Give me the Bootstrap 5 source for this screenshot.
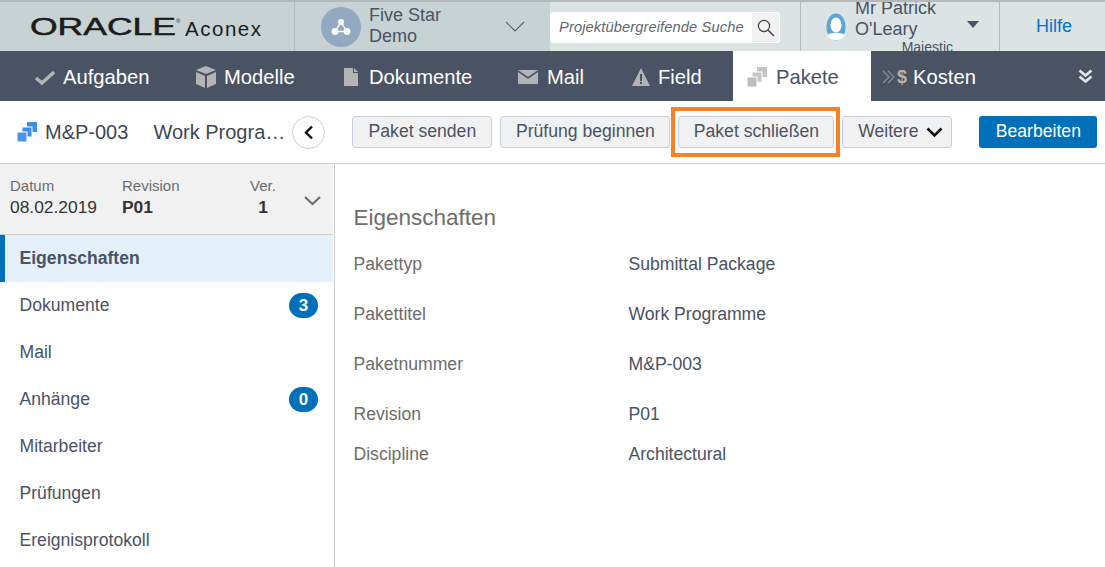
<!DOCTYPE html>
<html lang="de"><head><meta charset="utf-8"><title>Aconex</title>
<link href="https://cdn.jsdelivr.net/npm/bootstrap@5.3.0/dist/css/bootstrap.min.css" rel="stylesheet">
<style>
html,body{height:567px;overflow:hidden}
body{font-family:"Liberation Sans",Arial,sans-serif;color:#4a5364;background:#fff;font-size:17px}
.topbar{height:51px;border-top:2px solid #b4b8ba;background:#dbe3e4}
.logo-cell{width:295px;background:#c6d2d3;border-right:1px solid #aebcbd;flex:none}
.proj-cell{width:255px;background:#c6d2d3;flex:none;padding-left:26px;padding-right:25px}
.proj-icon{width:40px;height:40px;border-radius:50%;background:#92a9c1;flex:none}
.proj-name{font-size:18px;line-height:21px;color:#4a5364;margin-left:8px;width:120px;margin-top:-2px}
.search-cell{width:251px;flex:none;border-right:1px solid #aebcbd;padding-top:10px}
.search-box{width:230px;height:31px;background:#fff;border-radius:3px;display:flex;align-items:center;padding:1px}
.search-text{font-style:italic;color:#5f6670;font-size:14.7px;padding-left:8px;flex:1;white-space:nowrap;letter-spacing:.1px;overflow:visible}
.search-btn{width:27px;height:29px;background:#f1f1f1;display:flex;align-items:center;justify-content:center;flex:none}
.user-cell{width:199px;flex:none;border-right:1px solid #aebcbd;overflow:hidden;padding-left:25px}
.user-icon{flex:none}
.user-name{font-size:18px;line-height:21px;color:#4a5364;width:105px;margin-left:9px;flex:none}
.user-org{display:block;font-size:14px;line-height:16px;text-align:right;margin-right:7px;margin-top:-1px;white-space:nowrap}
.user-arrow{margin-left:7px;margin-bottom:5px;flex:none}
.help-cell{flex:1;text-align:center;color:#0572ce;font-size:18px;line-height:49px;padding-left:3px}
.mainnav{height:50px;background:#4a5364;padding-left:35px}
.nav-entry{display:flex;align-items:center;height:50px;padding-top:2px;color:#fff;font-size:20.2px;white-space:nowrap;text-decoration:none;flex:none}
.nav-entry svg{flex:none}
.nav-active{background:#fff;color:#4a5364;padding-left:14px}
.w-auf{width:161px}.w-mod{width:148px}.w-dok{width:174px}.w-mai{width:114px}.w-fie{width:101px}.w-pak{width:138px}
.icon-gap-doc{margin-right:11px}.icon-gap-pak{margin-right:9px}.icon-gap-fie{margin-right:8px}.icon-gap-mai{margin-right:9px}
.nav-cost{padding-left:11px}
.cost-sign{color:#b4b4b4;font-weight:700;font-size:18px;margin:0 6px 0 1px}
.nav-more{margin:18px 12px 0 auto}
.toolbar{height:63px;border-bottom:1px solid #cfcfcf;position:relative}
.pkg-icon{margin-left:17px;margin-right:8px;flex:none}
.pkg-no{font-size:20px;color:#3f4754}
.pkg-title{font-size:20px;color:#3f4754;width:134px;white-space:nowrap;overflow:hidden;text-overflow:ellipsis;margin-left:25px}
.back-btn{width:33px;height:33px;border-radius:50%;border:1px solid #c4ced8;background:#fff;display:flex;align-items:center;justify-content:center;margin-left:5px;flex:none;padding:0}
.act-btn{height:32px;background:#f1f1f1;border:1px solid #c4ced8;border-radius:3px;font-size:17.6px;color:#4a5364;padding:0 0 2px;display:flex;align-items:center;justify-content:center;flex:none;margin-left:8px}
.act-send{width:140px;margin-left:27px}.act-review{width:170px}.act-close{width:156px}
.act-more{width:110px;padding-left:6px}
.more-chev{margin-left:7px;margin-top:3px}
.edit-btn{height:32px;background:#0070bb;border:0;border-radius:3px;font-size:17.6px;color:#fff;width:118px;padding:0 0 2px;margin-left:27px;flex:none}
.orange-mark{position:absolute;left:671px;top:6px;width:169px;height:50px;border:4px solid #f98025;pointer-events:none}
.workarea{height:403px}
.side{width:335px;flex:none;border-right:1px solid #cfcfcf}
.meta{height:71px;background:#f1f1f1;border-bottom:1px solid #cfcfcf;padding-left:10px;padding-top:13px;width:333px}
.meta-lab{font-size:15px;color:#6c6c6c;line-height:18px}
.meta-val{font-size:17.4px;color:#333;line-height:25px}
.m-date{width:112px}.m-rev{width:128px}.m-ver{width:26px}
.meta-chev{margin:19px 0 0 28px;flex:none}
.side-item{height:47px;display:flex;align-items:center;padding-left:19.5px;padding-right:15px;font-size:17.6px;color:#4a5364;justify-content:space-between;width:333px}
.side-on{background:#e4f1fb;border-left:5px solid #0070bb;padding-left:14.5px;font-weight:700}
.count{width:29px;height:25px;border-radius:13px;background:#0070bb;color:#fff;font-size:17px;font-weight:700;display:flex;align-items:center;justify-content:center}
.props{padding:0 0 0 18.5px;flex:1}
.props h2{font-size:22.5px;font-weight:400;color:#6d6d6d;margin:41px 0 0;line-height:26px}
.prop-row{display:flex;font-size:17.6px;line-height:21px;margin-top:29px}
.prop-row span:first-child{width:275px;color:#6d6d6d}
.prop-row span:last-child{color:#4a5364}
.prop-row.first-prop{margin-top:23px}
.prop-row.tight-prop{margin-top:19px}
</style></head><body>
<header class="topbar d-flex">
  <div class="logo-cell d-flex align-items-center">
    <svg width="240" height="30" viewBox="0 0 240 30" class="ms-4" aria-label="Oracle Aconex" role="img"><text x="6" y="23" font-family="Liberation Sans" font-size="24" textLength="146" lengthAdjust="spacingAndGlyphs" fill="#1c1c1c" stroke="#1c1c1c" stroke-width=".5">ORACLE</text><text x="152" y="11" font-size="6" fill="#1c1c1c">®</text><text x="161" y="24" font-family="Liberation Sans" font-size="20.5" textLength="76" fill="#1c1c1c">Aconex</text></svg>
  </div>
  <div class="proj-cell d-flex align-items-center">
    <div class="proj-icon d-flex align-items-center justify-content-center"><svg width="20" height="20" viewBox="0 0 20 20"><path d="M10 5 4 14.5h12z" fill="none" stroke="#fff" stroke-width="1.4"/><circle cx="10" cy="5" r="3" fill="#fff"/><circle cx="4" cy="14.5" r="3.4" fill="#fff"/><circle cx="16" cy="14.5" r="3.4" fill="#fff"/></svg></div>
    <div class="proj-name">Five Star Demo</div>
    <svg class="ms-auto" width="20" height="12" viewBox="0 0 20 12"><path d="M1 1l9 9 9-9" fill="none" stroke="#5a6470" stroke-width="1.1"/></svg>
  </div>
  <div class="search-cell"><div class="search-box"><span class="search-text">Projektübergreifende Suche</span><span class="search-btn"><svg width="18" height="18" viewBox="0 0 18 18"><circle cx="7" cy="7" r="5.6" fill="none" stroke="#444" stroke-width="1.2"/><path d="M11 11l6 6" stroke="#444" stroke-width="1.5"/></svg></span></div></div>
  <div class="user-cell d-flex align-items-center">
    <svg width="20" height="28" viewBox="0 0 20 28" class="user-icon"><ellipse cx="10" cy="14" rx="9.6" ry="13.6" fill="#58a6dc"/><ellipse cx="10" cy="12" rx="5.6" ry="7.6" fill="#fff"/><path d="M1.5 22c3-3 14-3 17 0-2 7-15 7-17 0z" fill="#fff"/></svg>
    <div class="user-name">Mr Patrick O'Leary<span class="user-org">Majestic</span></div>
    <svg width="12" height="7" viewBox="0 0 12 7" class="user-arrow"><path d="M0 0h12L6 7z" fill="#4a5364"/></svg>
  </div>
  <div class="help-cell">Hilfe</div>
</header>
<nav class="mainnav d-flex">
  <a class="nav-entry w-auf"><svg class="me-2" width="20" height="15" viewBox="0 0 20 15"><path d="M1 8l6 5L19 2" fill="none" stroke="#b4b4b4" stroke-width="3.4"/></svg>Aufgaben</a>
  <a class="nav-entry w-mod"><svg class="me-2" width="20" height="22" viewBox="0 0 20 22"><path d="M10 0l10 4-10 4L0 4z" fill="#b4b4b4"/><path d="M0 6l9 4v12l-9-4zM20 6l-9 4v12l9-4z" fill="#b4b4b4"/></svg>Modelle</a>
  <a class="nav-entry w-dok"><svg class="icon-gap-doc" width="14" height="18" viewBox="0 0 14 18"><path d="M0 0h9v5h5v13H0zM10 0l4 4h-4z" fill="#b4b4b4"/></svg>Dokumente</a>
  <a class="nav-entry w-mai"><svg class="icon-gap-mai" width="20" height="14" viewBox="0 0 20 14"><rect width="20" height="14" fill="#b4b4b4"/><path d="M0 1l10 7 10-7" fill="none" stroke="#4a5364" stroke-width="1.6"/></svg>Mail</a>
  <a class="nav-entry w-fie"><svg class="icon-gap-fie" width="18" height="18" viewBox="0 0 18 18"><path d="M9 0l9 18H0z" fill="#b4b4b4"/><path d="M8 6h2v7H8zM8 14h2v2H8z" fill="#4a5364"/></svg>Field</a>
  <a class="nav-entry nav-active w-pak"><svg class="icon-gap-pak" width="20" height="21" viewBox="0 0 20 21"><rect x="10" y="0" width="10" height="10" fill="#c4c4c4"/><rect x="5" y="5" width="10" height="10" fill="#c4c4c4" stroke="#fff"/><rect x="0" y="10" width="10" height="10" fill="#bdbdbd" stroke="#fff"/></svg>Pakete</a>
  <a class="nav-entry nav-cost"><svg width="14" height="16" viewBox="0 0 14 16"><path d="M1 2l6 6-6 6M6 2l6 6-6 6" fill="none" stroke="#8a8f98" stroke-width="1.3"/></svg><span class="cost-sign">$</span>Kosten</a>
  <svg class="nav-more" width="15" height="15" viewBox="0 0 15 15"><path d="M1.500 1.500l6 5 6-5M1.500 7.500l6 5 6-5" fill="none" stroke="#e4e4e4" stroke-width="2.6"/></svg>
</nav>
<section class="toolbar d-flex align-items-center">
  <svg class="pkg-icon" width="20" height="21" viewBox="0 0 20 21"><rect x="10" y="0" width="10" height="10" fill="#3f8ee6"/><rect x="5" y="5" width="10" height="10" fill="#3f8ee6" stroke="#fff"/><rect x="0" y="10" width="10" height="10" fill="#4a94ea" stroke="#fff"/></svg>
  <span class="pkg-no">M&amp;P-003</span>
  <span class="pkg-title">Work Programme</span>
  <button class="back-btn" type="button" aria-label="Zurück"><svg width="10" height="15" viewBox="0 0 10 15"><path d="M8 1.500l-6 6 6 6" fill="none" stroke="#111" stroke-width="2.4"/></svg></button>
  <button class="act-btn act-send">Paket senden</button>
  <button class="act-btn act-review">Prüfung beginnen</button>
  <button class="act-btn act-close">Paket schließen</button>
  <button class="act-btn act-more">Weitere<svg class="more-chev" width="17" height="11" viewBox="0 0 17 11"><path d="M1.500 1.500L8.500 8.500l7-7" fill="none" stroke="#111" stroke-width="2.6"/></svg></button>
  <button class="edit-btn">Bearbeiten</button>
  <div class="orange-mark"></div>
</section>
<main class="workarea d-flex">
  <aside class="side">
    <div class="meta d-flex">
      <div class="m-date"><div class="meta-lab">Datum</div><div class="meta-val">08.02.2019</div></div>
      <div class="m-rev"><div class="meta-lab">Revision</div><div class="meta-val fw-bold">P01</div></div>
      <div class="m-ver text-center"><div class="meta-lab">Ver.</div><div class="meta-val fw-bold">1</div></div>
      <svg class="meta-chev" width="17" height="10" viewBox="0 0 17 10"><path d="M1 1l7.500 7 7.500-7" fill="none" stroke="#6f6f6f" stroke-width="2.2"/></svg>
    </div>
    <div class="side-item side-on">Eigenschaften</div>
    <div class="side-item">Dokumente<span class="count">3</span></div>
    <div class="side-item">Mail</div>
    <div class="side-item">Anhänge<span class="count">0</span></div>
    <div class="side-item">Mitarbeiter</div>
    <div class="side-item">Prüfungen</div>
    <div class="side-item">Ereignisprotokoll</div>
  </aside>
  <div class="props">
    <h2>Eigenschaften</h2>
    <div class="prop-row first-prop"><span>Pakettyp</span><span>Submittal Package</span></div>
    <div class="prop-row"><span>Pakettitel</span><span>Work Programme</span></div>
    <div class="prop-row"><span>Paketnummer</span><span>M&amp;P-003</span></div>
    <div class="prop-row"><span>Revision</span><span>P01</span></div>
    <div class="prop-row tight-prop"><span>Discipline</span><span>Architectural</span></div>
  </div>
</main>
</body></html>
